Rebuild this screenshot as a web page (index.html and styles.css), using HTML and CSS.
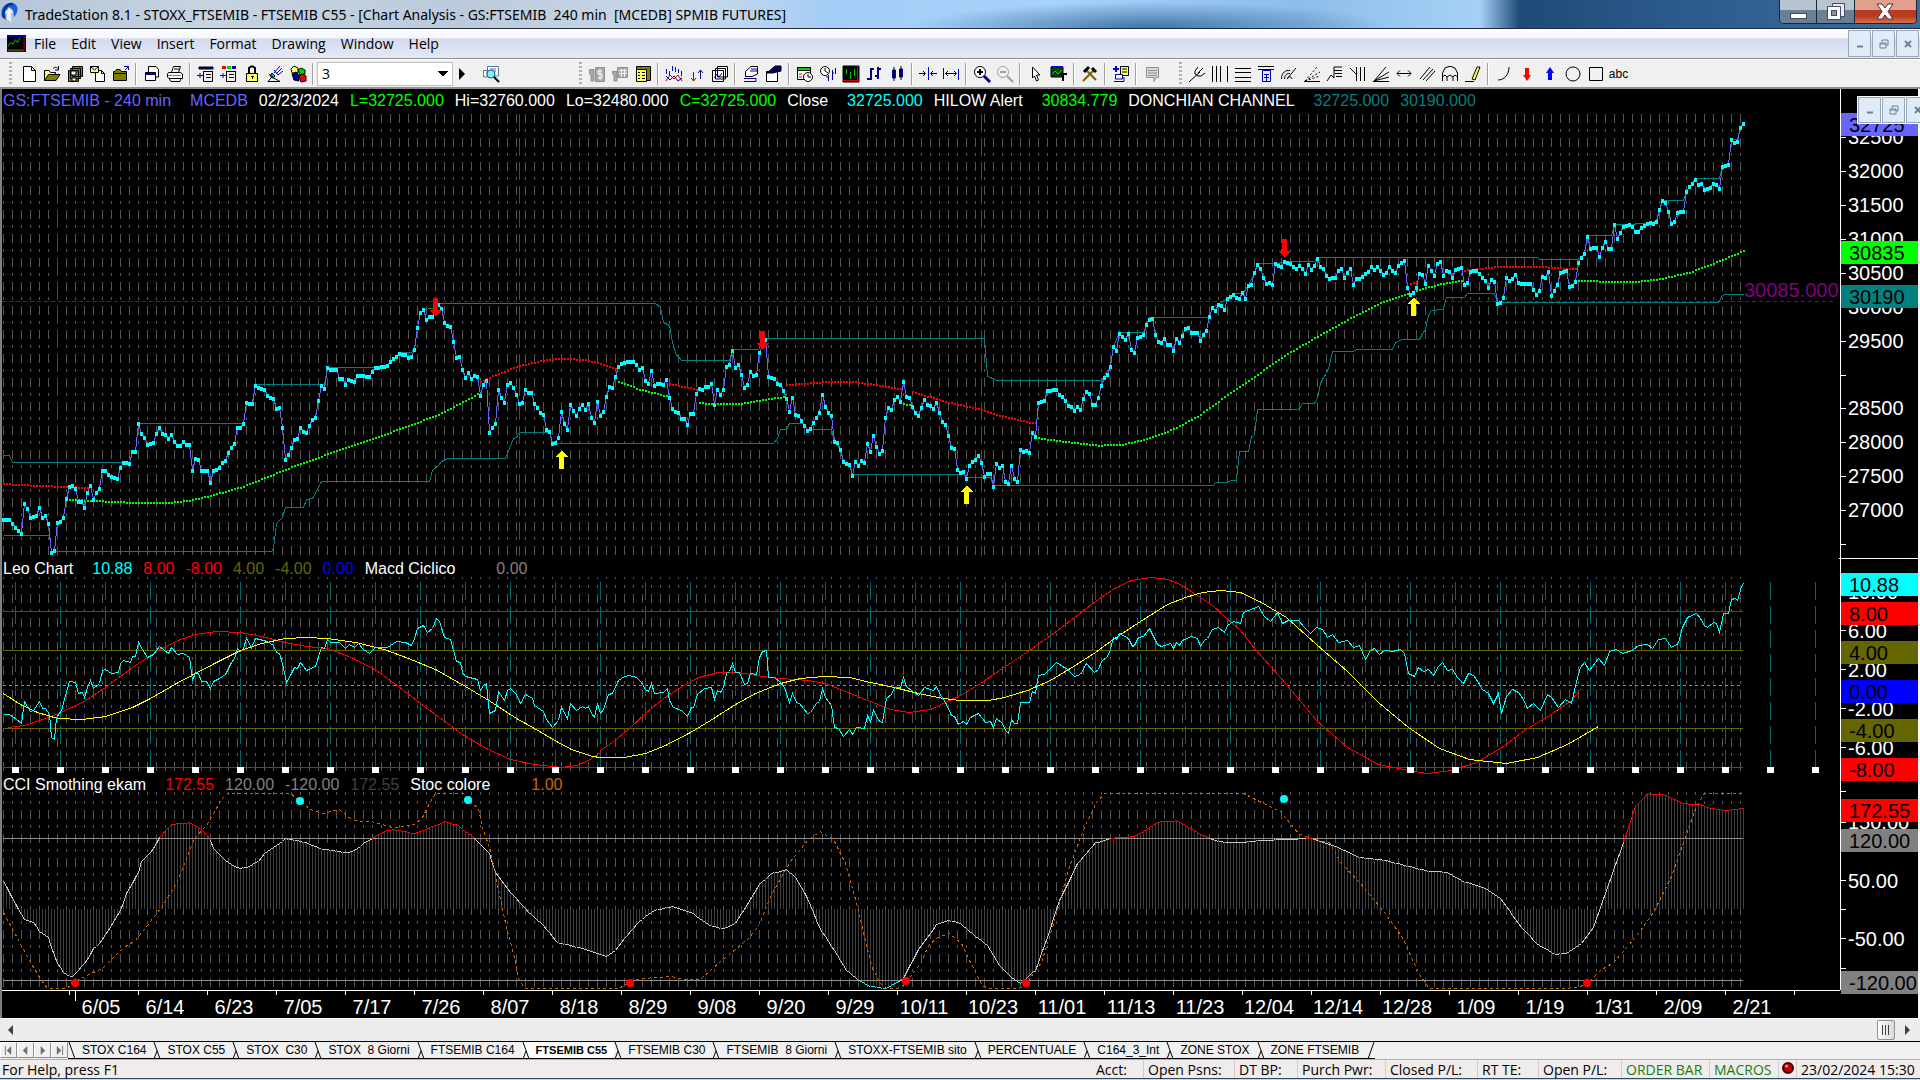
FILE: index.html
```html
<!DOCTYPE html>
<html lang="en">
<head>
<meta charset="utf-8">
<title>TradeStation 8.1 - STOXX_FTSEMIB</title>
<link rel="stylesheet" href="styles.css">
</head>
<body>
<div class="app">
<header class="titlebar">
  <svg class="logo" viewBox="0 0 20 24"><path d="M2 17C-1 8 7 0 15 4C19 7 18 13 14 17L13 10L9 7L5 12L6 20Z" fill="#1560d8"/><path d="M4 18C2 9 7 3 13 4" fill="none" stroke="#0a2c90" stroke-width="2"/><path d="M9 8L13 13H11V22L7 19V13H5Z" fill="#e8f2ff"/></svg>
  <h1>TradeStation 8.1 - STOXX_FTSEMIB - FTSEMIB C55 - [Chart Analysis - GS:FTSEMIB&nbsp; 240 min&nbsp; [MCEDB] SPMIB FUTURES]</h1>
  <div class="caption">
    <button class="min" aria-label="Minimize"><svg viewBox="0 0 20 20"><rect x="2.500" y="11.500" width="16" height="5" fill="#fff" stroke="#444a60"/></svg></button>
    <button class="max" aria-label="Restore"><svg viewBox="0 0 20 20"><path d="M6.500 1.500H18.500V14.500H6.500Z" fill="#eee" stroke="#444a60"/><path d="M1.500 4.500H14.500V17.500H1.500Z" fill="#fff" stroke="#444a60"/><rect x="5.500" y="8.500" width="5" height="5" fill="#7a96b8" stroke="#444a60"/></svg></button>
    <button class="close" aria-label="Close"><svg viewBox="0 0 20 20"><path d="M2 2H7L10 6L13 2H18L13 9.500L18 17H13L10 13L7 17H2L7 9.500Z" fill="#fff" stroke="#50303a"/></svg></button>
  </div>
</header>
<nav class="menubar">
  <svg class="doc" viewBox="0 0 20 18"><rect width="20" height="18"/><rect width="20" height="2" fill="#0000c0"/><path d="M1 12L4 8L6 10L9 5L11 8L14 3M1 16H17" stroke="#00d000" fill="none"/><path d="M18 2V17H1" stroke="#c00000" fill="none"/></svg>
  <a href="#">File</a><a href="#">Edit</a><a href="#">View</a><a href="#">Insert</a><a href="#">Format</a><a href="#">Drawing</a><a href="#">Window</a><a href="#">Help</a>
  <div class="mdi">
    <button aria-label="Minimize chart"><svg viewBox="0 0 12 12"><path d="M3 8.500H9" stroke-width="2"/></svg></button>
    <button aria-label="Restore chart"><svg viewBox="0 0 12 12"><path d="M4 4V2H10V7H8M2 5H8V10H2ZM2 6H8"/></svg></button>
    <button aria-label="Close chart"><svg viewBox="0 0 12 12"><path d="M3 3L9 9M9 3L3 9" stroke-width="2"/></svg></button>
  </div>
</nav>
<div class="toolbar">
  <div class="group first"><i class="grip"></i>
    <button aria-label="New"><svg viewBox="0 0 18 18"><path class="w" d="M3.500 1.500H11.500L15.500 5.500V16.500H3.500ZM11.500 1.500V5.500H15.500"/></svg></button>
    <button aria-label="Open"><svg viewBox="0 0 18 18"><path class="y" d="M1.500 15.500V5.500H6L7.500 7.500H12.500V9.500"/><path fill="#808000" d="M1.500 15.500L5.500 9.500H17L13 15.500Z"/><path d="M10 3.500C12 1.500 14 2 15.500 4.500M15.500 1V5H12"/></svg></button>
    <button aria-label="Save all"><svg viewBox="0 0 18 18"><path class="o" d="M6.500 1.500H16.500V11.500H6.500ZM4.500 3.500H14.500V13.500H4.500ZM2.500 5.500H12.500V16.500H2.500Z"/><path class="w" d="M5 6H10V10H5ZM6 13H10V16H6Z"/></svg></button>
    <button aria-label="New from template"><svg viewBox="0 0 18 18"><path class="w" d="M6.500 5.500H12.500L15.500 8.500V16.500H6.500ZM12.500 5.500V8.500H15.500"/><path class="y" d="M1.500 1.500H9.500V7.500H1.500ZM1.500 1.500L5.500 5L9.500 1.500"/></svg></button>
    <button aria-label="Close workspace"><svg viewBox="0 0 18 18"><path class="o" d="M1.500 15.500V6.500H3L4.500 4.500H8L9.500 6.500H14.500V15.500ZM2 8.500H14"/><path stroke="#0000a0" d="M12 1.500H16.500V5M16 2L13 5"/></svg></button>
    <i class="sep"></i>
    <button aria-label="Window"><svg viewBox="0 0 18 18"><path class="w" d="M5.500 1.500H13L15.500 4.500V12H5.500Z"/><path class="n" d="M2.500 7.500H12.500V15.500H2.500Z"/><path class="w" stroke="none" d="M3 10H12V15H3Z"/></svg></button>
    <button aria-label="Print"><svg viewBox="0 0 18 18"><path class="w" d="M5.500 7.500L7.500 1.500H14.500L12.500 7.500M8 4H13M2.500 7.500H14.500L16.500 9V13.500H3L1.500 12V9ZM3 13.500L5 16.500H14L15 13.500"/><path stroke="#808080" d="M2 10.500H15"/></svg></button>
    <i class="sep"></i>
    <button aria-label="Insert row"><svg viewBox="0 0 18 18"><path class="n" d="M2 2H16V4H2Z"/><path d="M6 6.500H16M6.500 7V16.500H15.500V6M9 9.500H14M9 12.500H14"/><path stroke="#0000a0" d="M0 10.500H7M3 8V13"/></svg></button>
    <button aria-label="Insert column"><svg viewBox="0 0 18 18"><path class="r" stroke="none" d="M2 1H6V4H2Z"/><path class="g" stroke="none" d="M7 1H11V4H7Z"/><path class="n" stroke="none" d="M12 1H16V4H12Z"/><path d="M6 6.500H16M6.500 7V16.500H15.500V6M9 9.500H14M9 12.500H14"/><path stroke="#0000a0" d="M0 10.500H7M3 8V13"/></svg></button>
    <button aria-label="Lock"><svg viewBox="0 0 18 18"><path stroke-width="2" d="M6 8V3L8 1.500H10L12 3V8"/><path class="y" d="M3.500 8.500H14.500V16.500H3.500Z"/><path d="M9.500 11V14M8 11.500H11"/></svg></button>
    <button aria-label="Signal"><svg viewBox="0 0 18 18"><path fill="#00c0c0" d="M6 8L9 11L7 13L4 11Z"/><path d="M2 16.500L6 12L14 16.500ZM3 9L9 14"/><path stroke="#0000c0" d="M8 8L14 1M10 9L16 3M12 10L17 6M8 5L12 10"/></svg></button>
    <button aria-label="Blocks"><svg viewBox="0 0 18 18"><path class="y" d="M2 4L5 1L9 3V8H3Z"/><path class="g" d="M9 5L12 3L16 5V9L11 10Z"/><path class="n" d="M3 9L7 7L10 10V16L5 15Z"/><path class="r" d="M10 11L14 9L17 11V16L12 17Z"/></svg></button>
    <i class="sep"></i>
    <select class="combo" aria-label="Symbol"><option>3</option></select>
    <button class="go" aria-label="Go"><svg viewBox="0 0 18 18"><path d="M6 3V15L12 9Z" fill="#000" stroke="none"/></svg></button>
    <button aria-label="Look up"><svg viewBox="0 0 18 18"><path class="w" stroke="#6070a0" d="M1.500 5.500H5V12H1.500ZM5.500 1.500H16.500V11H5.500ZM8 4H14M8 6H14"/><circle cx="9" cy="9" r="4" fill="#80f0f8" stroke="#206080"/><path stroke-width="2" d="M12 12L17 17"/></svg></button>
  </div>
  <div class="group second"><i class="grip"></i>
    <button aria-label="Symbol data"><svg viewBox="0 0 18 18"><path fill="#a8a8a8" stroke="#909090" d="M1.500 4.500H6V16H3V9H1.500ZM7.500 2.500H16.500V16.500H7.500Z"/><path stroke="#fff" d="M14 6H10V9H14V13H10M12 4V15"/></svg></button>
    <button aria-label="Table data"><svg viewBox="0 0 18 18"><path fill="#a8a8a8" stroke="#909090" d="M1.500 6.500H6V16H3V9H1.500ZM6.500 2.500H16.500V12.500H6.500Z"/><path stroke="#fff" d="M8 5.500H16M8 8.500H16M10.500 4V12M13.500 4V12"/></svg></button>
    <button aria-label="Data window"><svg viewBox="0 0 18 18"><path class="o" d="M2.500 1.500H16.500V15.500H2.500Z"/><path class="y" d="M2.500 4.500H12.500V16.500H2.500ZM4 7.500H6M8 7.500H11M4 10.500H6M8 10.500H11M4 13.500H6M8 13.500H11"/></svg></button>
    <i class="sep"></i>
    <button aria-label="Indicators"><svg viewBox="0 0 18 18"><path stroke="#0000d0" d="M1.500 4V9M4.500 6V10M7.500 1V6M10.500 2V7M13.500 4V8M16.500 6V11"/><path stroke="#d00000" d="M1 16L5 10L9 14L13 10L17 16"/><path stroke="#0000a0" d="M1 11L5 15L9 11L13 16L17 13"/></svg></button>
    <button aria-label="Strategies"><svg viewBox="0 0 18 18"><path stroke="#b00000" d="M5.500 7V16M3 13L5.500 16L8 13"/><path stroke="#000080" d="M12.500 5V14M10 8L12.500 5L15 8"/></svg></button>
    <button aria-label="Studies"><svg viewBox="0 0 18 18"><path class="w" d="M6.500 1.500H16.500V12H6.500ZM4.500 3.500H14.500V14H4.500ZM1.500 5.500H12.500V16.500H1.500Z"/><path stroke="#0000d0" d="M3 13L6 9L8 12L11 8"/></svg></button>
    <i class="sep"></i>
    <button aria-label="Format analysis"><svg viewBox="0 0 18 18"><path class="w" d="M3.500 6.500L9 1.500H15.500V9L10 11.500H3.500Z"/><path stroke="#000080" d="M2 13.500H14V16.500H2M9 4H15M8 6H15"/></svg></button>
    <button aria-label="Format window"><svg viewBox="0 0 18 18"><path class="w" d="M1.500 6.500H12.500V16.500H1.500Z"/><path fill="#000060" d="M2 8L10 1H16V6L8 8Z"/></svg></button>
    <i class="sep"></i>
    <button aria-label="Calendar"><svg viewBox="0 0 18 18"><path class="w" d="M1.500 2.500H14.500V14.500H1.500Z"/><path class="g" d="M1.500 2.500H14.500V5.500H1.500Z"/><path stroke="#c00000" d="M3 9H6M3 12H6"/><circle class="w" cx="12" cy="12" r="4.500"/><path d="M12 9V12H15"/></svg></button>
    <button aria-label="Time"><svg viewBox="0 0 18 18"><circle class="w" cx="6" cy="6" r="4.500"/><path d="M6 3V6L9 8"/><path stroke="#0000a0" d="M9.500 10V16M7 12H9M13.500 5V15M15 8H13M16.500 3V9"/></svg></button>
    <button aria-label="Bar style"><svg viewBox="0 0 18 18"><path fill="#000" d="M1 1H17V17H1Z"/><path stroke="#00d000" d="M4.500 4V9M8.500 7V14M12.500 4V11"/><path stroke="#d00000" d="M1 15.500H17M15.500 1V17"/></svg></button>
    <button aria-label="Bars"><svg viewBox="0 0 18 18"><path stroke="#000080" stroke-width="2" d="M6 3V15M2 14H6M6 4H9M13 2V14M10 11H13M13 4H16"/></svg></button>
    <button aria-label="Candles"><svg viewBox="0 0 18 18"><path class="n" stroke="#0000a0" d="M4.500 5H7.500V13H4.500ZM11.500 4H14.500V12H11.500Z"/><path d="M6 2V16M13 1V15"/></svg></button>
    <i class="sep"></i>
    <button aria-label="Decrease spacing"><svg viewBox="0 0 18 18"><path d="M0 8.500H6M4 6L6.500 8.500L4 11M18 8.500H12M14 6L11.500 8.500L14 11"/><path stroke="#0000c0" d="M9.500 2V15"/></svg></button>
    <button aria-label="Increase spacing"><svg viewBox="0 0 18 18"><path d="M4 8.500H14M6 6L3.500 8.500L6 11M12 6L14.500 8.500L12 11"/><path stroke="#0000c0" d="M1.500 3V14M16.500 4V15"/></svg></button>
    <i class="sep"></i>
    <button aria-label="Zoom in"><svg viewBox="0 0 18 18"><circle class="w" cx="7" cy="7" r="5.500"/><path stroke-width="2" d="M4 7H10M7 4V10"/><path stroke="#000080" stroke-width="3" d="M11 11L17 17"/></svg></button>
    <button aria-label="Zoom out"><svg viewBox="0 0 18 18"><circle cx="7" cy="7" r="5.500" stroke="#a0a0a0"/><path stroke="#a0a0a0" stroke-width="2" d="M4 7H10M11 11L17 17"/></svg></button>
    <i class="sep"></i>
    <button aria-label="Pointer"><svg viewBox="0 0 18 18"><path class="w" d="M5.500 2L13 10H9.500L11.500 15L9.500 16L7.500 11L5.500 13Z"/></svg></button>
    <button aria-label="Chart text"><svg viewBox="0 0 18 18"><path fill="#004000" d="M1 2H13V12H1Z"/><path stroke="#0000ff" stroke-width="2" d="M1 2H13"/><path stroke="#00e000" d="M2 9L5 6L8 9L12 5"/><path stroke-width="2" d="M9 9H17M13 9V16"/></svg></button>
    <i class="sep"></i>
    <button aria-label="Tools"><svg viewBox="0 0 18 18"><path stroke="#806000" stroke-width="2" d="M2 16L13 5M4 4L15 15"/><path stroke-width="3" d="M3 7L8 2M11 3L15 7"/></svg></button>
    <i class="sep"></i>
    <button aria-label="Add analysis"><svg viewBox="0 0 18 18"><path stroke="#0000e0" stroke-width="2" d="M4 1V7M1 4H7"/><path class="y" d="M8.500 1.500H16.500V10.500H8.500ZM10 4H15M10 7H15"/><path class="w" stroke="#000080" d="M3.500 9.500H10.500V14H3.500ZM2 16.500H12V12"/></svg></button>
    <i class="sep"></i>
    <button aria-label="Comments"><svg viewBox="0 0 18 18"><path fill="#d8d8d8" stroke="#909090" d="M3.500 2.500H15.500V12.500H13L11 16.500V12.500H3.500ZM5 5.500H14M5 8H14M5 10.500H14"/></svg></button>
  </div>
  <div class="group"><i class="grip"></i>
    <button aria-label="Pitchfork"><svg viewBox="0 0 18 18"><path d="M1 17L12 7M7 6L10 2M7 6V9L10 11H13L17 8M10 8L15 3"/></svg></button>
    <button aria-label="Vertical lines"><svg viewBox="0 0 18 18"><path d="M1.500 1V17M5.500 1V17M9.500 1V17M16.500 1V17"/></svg></button>
    <button aria-label="Horizontal lines"><svg viewBox="0 0 18 18"><path d="M1 3.500H17M1 7.500H17M1 12.500H17M1 16.500H17"/></svg></button>
    <button aria-label="Price levels"><svg viewBox="0 0 18 18"><path d="M1 1.500H17M1 4.500H17"/><path fill="#e0e8ff" stroke="#0000a0" d="M5.500 5.500H13.500V16.500H5.500ZM7 9.500H12M7 12.500H12M9.500 9V16"/></svg></button>
    <button aria-label="Fibonacci arcs"><svg viewBox="0 0 18 18"><path d="M1.500 14C1.500 7 6 5 10 5.500M4.500 14C4.500 10 7 8 10 8.500M7.500 14C8 11 11 11 12 14M7 14L16 3"/></svg></button>
    <button aria-label="Fan dotted"><svg viewBox="0 0 18 18"><path stroke-dasharray="2 2" d="M2 16L14 2M2 16L17 7M2 16L17 11"/><path d="M1 16.500H17"/></svg></button>
    <button aria-label="Retracement"><svg viewBox="0 0 18 18"><path d="M1 16L5 10L8 13V2H16M8 5.500H16M9 8.500H16M10 11.500H16"/></svg></button>
    <button aria-label="Time zones"><svg viewBox="0 0 18 18"><path d="M1 3L7 9M7.500 2V16M11.500 2V16M15.500 2V16"/></svg></button>
    <button aria-label="Gann fan"><svg viewBox="0 0 18 18"><path d="M1 16.500H17M2 16L14 2M2 16L17 7M2 16L17 12"/></svg></button>
    <button aria-label="Extend"><svg viewBox="0 0 18 18"><path d="M2 8.500H16M5 5.500L2 8.500L5 11.500M13 5.500L16 8.500L13 11.500"/></svg></button>
    <button aria-label="Channel"><svg viewBox="0 0 18 18"><path d="M2 14L12 2M5 15L15 4M8 16L17 6"/></svg></button>
    <button aria-label="Cycle"><svg viewBox="0 0 18 18"><path d="M1.500 16V8L4 3L8 1.500H10L14 3L16.500 8V16M1.500 12L4 10L6 12V16M6 12L9 10L12 12V16M12 12L14 10L16.500 12"/></svg></button>
    <button aria-label="Pencil"><svg viewBox="0 0 18 18"><path class="y" d="M8 14L13 2H16L11 15Z"/><path d="M1 16.500H10"/></svg></button>
    <i class="sep"></i>
    <button aria-label="Arc"><svg viewBox="0 0 18 18"><path d="M3 15C9 15 14 10 14 2"/></svg></button>
    <button aria-label="Down arrow"><svg viewBox="0 0 18 18"><path fill="#f00" stroke="none" d="M7 3H11V10H13L9 16L5 10H7Z"/></svg></button>
    <button aria-label="Up arrow"><svg viewBox="0 0 18 18"><path fill="#00f" stroke="none" d="M7 15H11V8H13L9 2L5 8H7Z"/></svg></button>
    <button aria-label="Ellipse"><svg viewBox="0 0 18 18"><circle cx="9" cy="9" r="7"/></svg></button>
    <button aria-label="Rectangle"><svg viewBox="0 0 18 18"><path d="M2.500 2.500H15.500V15.500H2.500Z"/></svg></button>
    <button class="abc">abc</button>
  </div>
</div>
<main class="chart">
  <section class="panel price">
    <p class="legend"><span class="violet">GS:FTSEMIB - 240 min</span><span class="violet far">MCEDB</span><span>02/23/2024</span><span class="lime">L=32725.000</span><span>Hi=32760.000</span><span>Lo=32480.000</span><span class="lime">C=32725.000</span><span>Close</span><span class="cyan far">32725.000</span><span>HILOW Alert</span><span class="lime far">30834.779</span><span>DONCHIAN CHANNEL</span><span class="teal far">32725.000</span><span class="teal">30190.000</span></p>
    <svg class="plot" id="price" viewBox="2 109 1838 449" preserveAspectRatio="none"></svg>
    <svg class="axis" viewBox="1841 89 77 469" preserveAspectRatio="none">
      <path class="ticks" d="M1840 137.500h6m-6 34h6m-6 34h6m-6 34h6m-6 34h6m-6 34h6m-6 34h6m-6 34h6m-6 33h6m-6 34h6m-6 34h6m-6 34h6m-6 34h6"/>
      <g class="lab"><text x="1848" y="144">32500</text><text x="1848" y="178">32000</text><text x="1848" y="212">31500</text><text x="1848" y="246">31000</text><text x="1848" y="280">30500</text><text x="1848" y="314">30000</text><text x="1848" y="348">29500</text><text x="1848" y="415">28500</text><text x="1848" y="449">28000</text><text x="1848" y="483">27500</text><text x="1848" y="517">27000</text></g>
      <g class="tag"><rect x="1841" y="113" width="77" height="23" fill="#6666ff"/><text x="1849" y="132">32725</text><rect x="1841" y="241" width="77" height="23" fill="#00ff00"/><text x="1849" y="260">30835</text><rect x="1841" y="285" width="77" height="23" fill="#008080"/><text x="1849" y="304">30190</text></g>
      <path class="ticks" d="M1839 558.500H1918"/>
    </svg>
  </section>
  <section class="panel leo">
    <p class="legend"><span>Leo Chart</span><span class="cyan far">10.88</span><span class="red">8.00</span><span class="red">-8.00</span><span class="olive">4.00</span><span class="olive">-4.00</span><span class="blue">0.00</span><span>Macd Ciclico</span><span class="gray farther">0.00</span></p>
    <svg class="plot" id="leo" viewBox="2 577 1838 198" preserveAspectRatio="none"></svg>
    <svg class="axis" viewBox="1841 558 77 217" preserveAspectRatio="none">
      <path class="ticks" d="M1840 591.500h6m-6 39h6m-6 39h6m-6 39h6m-6 39h6"/>
      <g class="lab"><text x="1848" y="599">10.00</text><text x="1848" y="638">6.00</text><text x="1848" y="677">2.00</text><text x="1848" y="716">-2.00</text><text x="1848" y="755">-6.00</text></g>
      <g class="tag"><rect x="1841" y="573" width="77" height="23" fill="#00ffff"/><text x="1849" y="592">10.88</text><rect x="1841" y="602" width="77" height="23" fill="#ff0000"/><text x="1849" y="621">8.00</text><rect x="1841" y="641" width="77" height="23" fill="#666600"/><text x="1849" y="660">4.00</text><rect x="1841" y="680" width="77" height="23" fill="#0000ff"/><text x="1849" y="699">0.00</text><rect x="1841" y="719" width="77" height="23" fill="#666600"/><text x="1849" y="738">-4.00</text><rect x="1841" y="758" width="77" height="23" fill="#ff0000"/><text x="1849" y="777">-8.00</text></g>
    </svg>
  </section>
  <section class="panel cci">
    <p class="legend"><span>CCI Smothing ekam</span><span class="red far">172.55</span><span class="gray">120.00</span><span class="gray">-120.00</span><span class="dark">172.55</span><span>Stoc colore</span><span class="orange farther">1.00</span></p>
    <svg class="plot" id="cci" viewBox="2 792 1838 198" preserveAspectRatio="none"></svg>
    <svg class="axis" viewBox="1841 775 77 215" preserveAspectRatio="none">
      <path class="ticks" d="M1840 791.500h6m-6 31h6m-6 58h6m-6 29h6m-6 29h6m-6 30h6"/>
      <g class="lab"><text x="1848" y="829">150.00</text><text x="1848" y="888">50.00</text><text x="1848" y="946">-50.00</text></g>
      <g class="tag"><rect x="1841" y="799" width="77" height="23" fill="#ff0000"/><text x="1849" y="818">172.55</text><rect x="1841" y="829" width="77" height="23" fill="#808080"/><text x="1849" y="848">120.00</text><rect x="1841" y="971" width="77" height="23" fill="#808080"/><text x="1849" y="990">-120.00</text></g>
    </svg>
  </section>
  <svg class="dates" id="dates" viewBox="2 990 1916 28" preserveAspectRatio="none"></svg>
  <div class="mdi floating">
    <button aria-label="Minimize window"><svg viewBox="0 0 12 12"><path d="M3 8.500H9" stroke-width="2"/></svg></button>
    <button aria-label="Restore window"><svg viewBox="0 0 12 12"><path d="M4 4V2H10V7H8M2 5H8V10H2ZM2 6H8"/></svg></button>
    <button aria-label="Close window"><svg viewBox="0 0 12 12"><path d="M3 3L9 9M9 3L3 9" stroke-width="2"/></svg></button>
  </div>
</main>
<div class="scroll">
  <button aria-label="Scroll left"><svg viewBox="0 0 8 12"><path d="M6 1V11L1 6Z"/></svg></button>
  <button class="thumb" aria-label="Scroll thumb"><svg viewBox="0 0 10 10"><path d="M1 0h1v10h-1zM4 0h1v10h-1zM7 0h1v10h-1z"/></svg></button>
  <button aria-label="Scroll right"><svg viewBox="0 0 8 12"><path d="M2 1V11L7 6Z"/></svg></button>
</div>
<nav class="tabs" id="tabs">
  <button class="nav" aria-label="First"><svg viewBox="0 0 10 10"><path d="M1 0H2V10H1ZM8 0V10L3 5Z"/></svg></button>
  <button class="nav" aria-label="Previous"><svg viewBox="0 0 10 10"><path d="M7 0V10L2 5Z"/></svg></button>
  <button class="nav" aria-label="Next"><svg viewBox="0 0 10 10"><path d="M3 0V10L8 5Z"/></svg></button>
  <button class="nav" aria-label="Last"><svg viewBox="0 0 10 10"><path d="M2 0V10L7 5ZM8 0H9V10H8Z"/></svg></button>
  <a href="#">STOX C164</a><a href="#">STOX C55</a><a href="#">STOX  C30</a><a href="#">STOX  8 Giorni</a><a href="#">FTSEMIB C164</a><a href="#" class="active">FTSEMIB C55</a><a href="#">FTSEMIB C30</a><a href="#">FTSEMIB  8 Giorni</a><a href="#">STOXX-FTSEMIB sito</a><a href="#">PERCENTUALE</a><a href="#">C164_3_Int</a><a href="#">ZONE STOX</a><a href="#" class="last">ZONE FTSEMIB</a>
</nav>
<footer class="status">
  <span class="help">For Help, press F1</span><span>Acct:</span><span>Open Psns:</span><span>DT BP:</span><span>Purch Pwr:</span><span>Closed P/L:</span><span>RT TE:</span><span>Open P/L:</span><span class="on">ORDER BAR</span><span class="on">MACROS</span><span class="led"><svg viewBox="0 0 12 12"><circle cx="6" cy="6" r="5" fill="#c00000" stroke="#400000" stroke-width="2"/><circle cx="4.500" cy="4" r="1.500" fill="#ff9090"/></svg></span><span>23/02/2024 15:30</span>
</footer>
</div>
<script src="chart.js"></script>
</body>
</html>
```
FILE: styles.css
```css
* { box-sizing: border-box; }
body { margin: 0; background: #f0eeee; font: 14px "Open Sans", "Noto Sans", sans-serif; color: #000; }
button { border: 0; padding: 0; background: none; }
a { color: inherit; text-decoration: none; }
svg { display: block; }
.app { display: grid; grid-template-rows: 29px 30px 30px 1fr 23px 18px 21px; min-height: 100vh; overflow: hidden; }

.titlebar { display: flex; align-items: flex-start; border-bottom: 1px solid #1c2a3c;
  background:
    radial-gradient(ellipse 240px 26px at 1150px 28px, #3f74a8 0, transparent 100%),
    linear-gradient(90deg, #b4c5d8 0, #c6d3e0 200px, #bccbdc 460px, #c8d9ea 700px, #a3cdf6 830px, #a8d2fa 1050px, #8dbdea 1300px, #a6d0f6 1480px, #1f4a78 1520px, #2b5b8c 1680px, #3d6c9c 100%); }
.logo { width: 20px; height: 24px; }
.titlebar h1 { flex: 1; margin: 0 0 0 5px; font-family: "Noto Sans", sans-serif; font-size: 14px; line-height: 29px; font-weight: 400; white-space: nowrap; }
.caption { display: flex; width: 138px; height: 24px; margin-right: 3px; border: 1px solid #1c2430; border-top: 0; border-radius: 0 0 5px 5px; overflow: hidden; }
.caption button { flex: 37; display: grid; place-items: center; background: linear-gradient(#b8c4d0 0 45%, #6b7f94 45% 100%); border-right: 1px solid #1c2430; }
.caption .close { flex: 62; background: linear-gradient(#e0a08c 0 45%, #b83c20 45% 70%, #d8704c); border: 0; }
.caption svg { width: 20px; height: 20px; }

.menubar { display: flex; align-items: center; gap: 15px; padding-left: 7px; background: linear-gradient(#fff 0, #f4f6fb 30%, #d4dbee 34%, #e4e8f6 100%); border-bottom: 1px solid #909090; }
.menubar .doc { width: 19px; height: 17px; margin-right: -7px; }
.mdi { display: flex; gap: 1px; margin-left: auto; }
.mdi button { width: 23px; height: 27px; display: grid; place-items: center; background: #dfebf7; border: 1px solid #98a8b8; }
.mdi svg { width: 12px; height: 12px; fill: none; stroke: #70808e; }
.menubar .mdi { margin-right: 1px; }
.floating { position: absolute; top: 7px; right: -12px; border: 1px solid #fff; background: #fff; }
.floating button { height: 26px; }

.toolbar { display: flex; background: #f0f0f0; border-bottom: 2px solid #909090; border-top: 1px solid #fff; }
.group { display: flex; align-items: center; padding-left: 9px; }
.group.first { width: 570px; }
.group.second { width: 600px; }
.grip { width: 3px; height: 24px; margin-right: 3px; background: repeating-linear-gradient(#b0b0b0 0 2px, transparent 2px 4px); }
.first .grip { margin-right: 5px; }
.sep { width: 8px; height: 22px; background: linear-gradient(90deg, transparent 3px, #a0a0a0 3px 4px, #fff 4px 5px, transparent 5px); }
.group button { width: 23px; height: 24px; display: grid; place-items: center; }
.group svg { width: 18px; height: 18px; fill: none; stroke: #000; }
.group .go { width: 18px; margin-right: 8px; }
.group .w { fill: #fff; }
.group .y { fill: #ffff60; }
.group .o { fill: #808000; }
.group .n { fill: #0000a0; }
.group .r { fill: #f00000; }
.group .g { fill: #00d000; }
.group .abc { font: 12px "Liberation Sans", sans-serif; color: #000; }
.combo { width: 136px; height: 24px; padding: 0 4px; border: 1px solid #c0c0c0; border-radius: 0; appearance: none; font: 14px "Open Sans", sans-serif; color: #000;
  background-color: #fff; background-repeat: no-repeat; background-size: 5px 6px; background-position: right 4px center, right 9px center;
  background-image: linear-gradient(to bottom right, #000 50%, transparent 50%), linear-gradient(to bottom left, #000 50%, transparent 50%); }

.chart { position: relative; display: grid; grid-template-rows: 469fr 217fr 215fr 28fr; background: #000; border-left: 2px solid #808080; border-right: 2px solid #fff; }
.panel { display: grid; grid-template-columns: 1fr 78px; min-height: 0; }
.price { grid-template-rows: 20px 1fr; }
.leo { grid-template-rows: 19px 1fr; }
.cci { grid-template-rows: 17px 1fr; }
.legend { display: flex; gap: 11px; margin: 0; padding-left: 1px; font: 16px/22px "Liberation Sans", Arial, sans-serif; color: #fff; white-space: nowrap; }
.price .legend { line-height: 24px; }
.cci .legend { line-height: 19px; }
.legend .far { margin-left: 8px; }
.legend .farther { margin-left: 30px; }
.plot, .axis { width: 100%; height: 100%; overflow: visible; }
.axis { grid-column: 2; grid-row: 1 / 3; border-left: 1px solid #fff; }
.plot { grid-row: 2; }
.plot * { shape-rendering: crispEdges; fill: none; }
.plot .dot { shape-rendering: auto; }
.violet { color: #6666ff; }
.lime { color: #00ff00; }
.cyan { color: #00ffff; }
.teal { color: #008080; }
.red { color: #ff0000; }
.olive { color: #666600; }
.blue { color: #0000ff; }
.gray { color: #808080; }
.dark { color: #404040; }
.orange { color: #cc6600; }
.ticks { stroke: #fff; stroke-width: 1; shape-rendering: crispEdges; }
.axis text, .dates text, .plot text { font: 20px "Liberation Sans", Arial, sans-serif; }
.lab, .dates text { fill: #fff; }
.tag text { fill: #000; }
.dates { width: 100%; height: 100%; }
.dates text { text-anchor: middle; }

.plot .grid { stroke: #565656; stroke-dasharray: 9 6 3 6; }
.plot .session { stroke: #006666; stroke-dasharray: 18 6; }
.plot .donchian { stroke: #008080; }
.plot .close { stroke: #6666ff; }
.plot .closedots { stroke: #00ffff; stroke-width: 4; }
.plot .down { stroke: #ff0000; stroke-width: 2; }
.plot .up { stroke: #00ff00; stroke-width: 2; }
.plot .level { stroke: #800080; stroke-dasharray: 4 3; }
.plot .leveltext { fill: #800080; }
.plot .arrowdown { fill: #ff0000; }
.plot .arrowup { fill: #ffff00; }
.plot .redline { stroke: #ff0000; }
.plot .yellowline { stroke: #ffff00; }
.plot .cyanline { stroke: #00ffff; }
.plot .oliveline { stroke: #666600; }
.plot .grayline { stroke: #909090; }
.plot .graydash { stroke: #909090; stroke-dasharray: 3 3; }
.plot .bluedash { stroke: #0000ff; stroke-dasharray: 3 3; }
.plot .marks { fill: #fff; }
.plot .histogram { stroke: #404040; }
.plot .whiteline { stroke: #c8c8c8; }
.plot .stoc { stroke: #cc6600; stroke-dasharray: 3 3; }
.plot .reddot { fill: #ff0000; }
.plot .cyandot { fill: #00ffff; }

.scroll { display: flex; align-items: center; justify-content: flex-end; background: #ececec; border-top: 1px solid #fff; padding-right: 5px; }
.scroll button { width: 16px; height: 20px; display: grid; place-items: center; }
.scroll button:first-child { margin: 0 auto 0 3px; }
.scroll svg { width: 8px; height: 12px; fill: #404040; }
.scroll .thumb { width: 18px; margin-right: 4px; border: 1px solid #909090; border-radius: 2px; background: linear-gradient(90deg, #fff, #d8d8d8); }
.scroll .thumb svg { width: 10px; height: 10px; }

.tabs { display: flex; border-top: 1px solid #000; background: #f0f0f0; font: 12px/16px "Liberation Sans", Arial, sans-serif; }
.tabs .nav { width: 17px; height: 16px; display: grid; place-items: center; border: 1px solid #909090; border-top-color: #fff; border-left-color: #fff; }
.tabs .nav svg { width: 9px; height: 9px; fill: #707070; }
.tabs a { display: flex; height: 17px; padding-right: 7px; white-space: pre; border-bottom: 1px solid #000; }
.tabs a svg { width: 8px; height: 17px; margin-right: 6px; overflow: visible; fill: none; stroke: #000; }
.tabs .active { background: #fff; font-weight: 700; font-size: 11px; }
.tabs .last { padding-right: 0; }
.tabs .last svg:last-child { margin: 0 0 0 8px; }

.status { display: flex; height: 19px; line-height: 19px; background: #f0ecec; border-top: 1px solid #b0b0b0; box-shadow: 0 1px 0 #304860, 0 3px 0 #c8d8e8; white-space: nowrap; }
.status span { padding-left: 4px; border-left: 1px solid #d0ccd0; }
.status .help { flex: 1; padding-left: 2px; border: 0; }
.status span:nth-child(2) { width: 52px; border-color: transparent; }
.status span:nth-child(3) { width: 91px; }
.status span:nth-child(4) { width: 63px; }
.status span:nth-child(5) { width: 88px; }
.status span:nth-child(6) { width: 92px; }
.status span:nth-child(7) { width: 61px; }
.status span:nth-child(8) { width: 83px; }
.status span:nth-child(9) { width: 88px; }
.status span:nth-child(10) { width: 69px; }
.status span:nth-child(11) { width: 18px; padding: 2px 0 0 3px; }
.status span:nth-child(12) { width: 124px; }
.status .on { color: #108010; }
.status .led svg { width: 12px; height: 12px; }
```
FILE: chart.js
```js
const NS = 'http://www.w3.org/2000/svg';
const BAR = 3, FIRST = 3;

function add(id, tag, cls, attrs, text) {
  const el = document.createElementNS(NS, tag);
  if (cls) el.setAttribute('class', cls);
  for (const k in attrs) el.setAttribute(k, attrs[k]);
  if (text) el.textContent = text;
  document.getElementById(id).appendChild(el);
}
/* A block of samples: origin, units per pixel, then x,y pairs. */
function block(x0, y0, ux, uy, text) {
  return text.trim().split(/\s+/).map(p => {
    const [x, y] = p.split(',').map(Number);
    return [x0 + x / ux, y0 + y / uy];
  });
}
const a = t => block(0, 280, 2.45, 3, t);
const b = t => block(600, 280, 2.45, 3, t);
const c = t => block(1200, 100, 2.45, 3, t);
const w = t => block(0, 0, 0.81667, 0.81667, t);
const e = t => block(0, 740, 2.45, 3, t);
const f = t => block(0, 0, 1, 1, t);
const d = pts => 'M' + pts.map(p => p.map(v => Math.round(v) + 0.5).join(' ')).join('L');
const snap = x => FIRST + BAR * Math.round((x - FIRST) / BAR);
/* One value for every bar between the first and last key point. */
function bars(pts) {
  const out = [];
  const k = pts.map(p => [snap(p[0]), p[1]]).sort((p, q) => p[0] - q[0]);
  let i = 0;
  for (let x = k[0][0]; x <= k[k.length - 1][0]; x += BAR) {
    while (i < k.length - 2 && k[i + 1][0] < x) i++;
    const p = k[i], q = k[i + 1] || p;
    const t = q[0] === p[0] ? 1 : Math.min(1, (x - p[0]) / (q[0] - p[0]));
    out.push([x, p[1] + (q[1] - p[1]) * t]);
  }
  return out;
}
const dots = (pts, s) => bars(pts).map(p => `M${p[0] - s / 2 + 0.5} ${Math.round(p[1]) + (s % 2 ? 0.5 : 0)}h${s}`).join('');

function grid(id, top, bottom) {
  let path = '';
  const start = top - ((top - 90) % 24);
  for (let x = 3; x <= 1740; x += 9) path += `M${x + 0.5} ${start}V${bottom}`;
  add(id, 'path', 'grid', { d: path, 'clip-path': `inset(${Math.max(0, top - start)}px 0 0 0)` });
}
const line = (id, cls, y, x1 = 3, x2 = 1743) => add(id, 'path', cls, { d: `M${x1} ${y + 0.5}H${x2}` });

/* Price panel */
grid('price', 109, 555);
let s = '';
for (const x of [57, 519, 981, 1443]) s += `M${x + 0.5} 114V556`;
add('price', 'path', 'session', { d: s });
line('price', 'level', 301, 2, 1835);
add('price', 'text', 'leveltext', { x: 1744, y: 297 }, '30085.000');

const upper = [
  ...a('8,526 22,526 30,547 302,547 316,546 324,515 331,513 339,430 596,430 603,368 618,366 625,313 787,313 794,313 801,262 918,262 948,256 978,217 1007,217 1015,205 1022,140 1030,96 1037,86 1059,85 1067,70 1469,70'),
  ...b('0,70 135,70 148,82 155,125 168,134 177,185 185,226 192,228 199,241 317,241 324,208 388,208 405,175 941,175 949,288 968,296 970,301 1228,301 1250,257 1257,197 1272,157 1331,157 1346,112 1469,112'),
  ...c('0,652 15,652 22,648 30,622 67,594 82,580 103,578 118,555 133,515 140,490 192,490 207,482 280,482 287,472 825,472 831,478 927,478 941,458 949,406 1007,406 1015,373 1059,373 1074,370 1089,370 1118,362 1132,301 1184,301 1191,272 1213,235 1272,235 1279,198 1294,192 1301,116 1315,116 1324,80 1331,69')];
const lower = [
  ...a('8,766 119,766 126,814 665,814 670,805 677,728 690,710 699,680 743,680 750,656 765,654 787,604 1050,604 1059,570 1074,555 1081,542 1096,535 1237,535 1257,475 1265,470 1272,455 1345,455 1353,488 1469,488'),
  ...b('0,488 425,488 434,475 442,446 456,446 464,430 498,430 508,448 567,448 574,483 589,507 596,543 611,550 618,583 890,583 897,592 956,592 963,616 1469,616'),
  ...c('0,1156 32,1156 37,1147 67,1147 74,1141 89,1141 96,1054 118,1054 125,1008 133,1005 140,928 235,928 243,925 250,910 280,910 287,895 295,850 302,830 309,820 317,795 324,754 375,754 383,748 471,748 478,725 486,724 493,718 537,718 544,700 552,688 559,645 566,629 596,626 603,592 648,592 655,580 721,580 728,607 1270,607 1280,586 1287,583 1331,583')];
add('price', 'path', 'donchian', { d: d(upper) });
add('price', 'path', 'donchian', { d: d(lower) });

const close = [
  ...a('8,717 22,717 30,730 38,740 45,750 52,760 59,670 67,685 74,712 82,708 89,705 96,680 104,710 111,705 119,728 126,815 133,810 141,727 148,722 155,710 163,655 170,618 177,615 185,623 192,664 199,662 207,680 214,635 221,615 229,657 236,635 243,623 250,570 257,570 265,582 272,588 287,594 294,562 302,546 316,548 324,513 331,513 339,430 346,458 353,471 361,492 375,486 383,458 390,442 397,458 405,462 412,474 420,462 427,482 434,495 442,496 449,483 456,491 464,492 471,570 478,533 486,537 493,570 508,570 515,605 522,570 530,568 537,560 544,546 552,540 559,515 566,502 574,488 581,441 588,440 596,430 603,367 618,369 625,315 633,320 647,327 655,345 669,355 677,384 684,381 691,440 699,536 706,521 713,500 721,477 728,474 735,440 743,454 750,456 757,436 765,418 772,411 780,359 787,316 794,323 801,262 809,268 823,268 831,294 838,295 845,312 853,296 867,302 875,285 889,285 904,288 911,273 918,262 948,256 956,243 963,234 970,228 978,218 992,223 1000,232 1007,228 1015,206 1022,140 1030,96 1037,87 1044,117 1052,108 1059,107 1067,75 1074,72 1081,84 1088,125 1096,134 1103,137 1110,183 1118,232 1125,228 1132,268 1140,290 1147,276 1154,293 1162,285 1169,287 1176,345 1184,311 1191,300 1198,456 1206,441 1213,430 1221,327 1228,352 1235,366 1243,311 1250,305 1257,321 1265,341 1272,369 1279,366 1286,327 1294,335 1301,336 1309,369 1316,380 1323,395 1331,401 1338,447 1345,452 1353,489 1360,486 1367,472 1375,393 1382,430 1390,447 1397,373 1404,390 1412,405 1419,383 1426,373 1434,386 1441,368 1448,410 1456,427 1463,362'),
  ...b('1,405 8,393 15,348 22,318 30,321 37,288 44,258 52,250 60,245 67,242 82,244 89,252 96,267 103,262 111,299 118,310 125,271 133,316 140,309 155,311 162,296 170,351 177,384 185,393 192,395 199,413 207,413 214,432 221,399 229,399 236,339 243,323 251,326 258,317 265,317 273,308 280,372 287,327 295,342 302,327 309,259 317,252 324,210 331,262 339,252 346,282 353,321 361,311 368,274 375,286 383,282 390,215 397,195 405,177 412,287 427,294 434,308 442,312 449,329 456,354 464,393 471,350 478,402 486,405 493,419 500,434 508,450 515,443 522,425 530,411 537,396 544,341 552,377 559,395 567,405 574,483 581,486 589,507 596,543 611,552 618,585 625,543 633,555 640,540 648,546 655,488 662,513 669,464 677,497 684,519 692,510 699,410 706,381 713,386 721,357 728,347 736,362 743,302 750,348 757,350 765,378 772,396 780,405 787,381 794,356 802,371 809,374 816,384 824,365 831,396 838,424 846,431 853,465 860,500 868,503 875,566 882,575 890,573 897,594 904,554 912,542 919,537 927,526 934,545 941,587 948,580 956,578 963,618 970,548 978,561 985,555 993,602 1000,609 1007,554 1015,594 1022,603 1030,507 1037,513 1045,510 1052,516 1059,455 1066,467 1074,366 1088,360 1096,330 1118,327 1125,341 1132,348 1139,360 1147,375 1154,377 1162,390 1169,378 1177,387 1184,353 1191,332 1198,338 1206,372 1213,372 1221,350 1228,315 1235,291 1243,282 1250,257 1257,197 1265,210 1272,160 1280,168 1287,178 1294,158 1301,206 1309,216 1316,171 1324,167 1331,161 1338,131 1346,116 1353,114 1360,161 1368,183 1375,187 1382,173 1390,192 1397,191 1404,210 1412,173 1419,186 1427,164 1434,143 1441,140 1448,156 1463,156'),
  ...c('0,720 8,702 15,690 22,648 30,622 37,630 45,611 52,614 59,627 67,594 74,587 82,581 89,590 96,593 103,575 111,593 118,555 125,551 133,515 140,491 148,503 155,531 162,549 170,546 177,551 185,489 192,494 199,498 207,482 214,486 221,489 229,498 236,504 243,494 250,504 258,518 265,492 272,506 280,494 287,473 295,499 302,503 309,524 317,533 331,531 339,510 346,503 353,531 361,515 368,503 375,551 383,534 390,533 397,527 405,518 412,512 419,497 427,507 434,497 441,510 449,522 456,515 463,497 471,510 478,516 486,495 493,485 500,479 508,561 515,582 522,575 530,561 537,518 544,522 552,548 559,494 566,509 574,524 581,489 589,482 596,525 603,509 611,512 618,531 625,506 640,500 647,552 655,546 662,513 669,510 677,509 684,518 691,531 699,540 706,561 713,537 721,543 728,609 735,606 743,590 750,531 757,539 765,534 772,521 779,545 794,550 809,548 816,567 824,581 831,569 838,527 846,531 853,512 860,585 868,569 875,551 882,515 897,509 904,558 912,555 919,543 927,485 934,471 941,458 949,407 956,443 970,440 978,468 985,441 993,422 1000,443 1007,443 1015,373 1022,413 1030,395 1037,377 1052,372 1059,377 1067,392 1074,393 1081,380 1089,374 1103,365 1110,369 1118,362 1125,327 1132,300 1139,305 1147,333 1154,369 1162,363 1169,335 1184,332 1191,272 1199,257 1206,248 1213,236 1221,251 1228,248 1236,267 1250,260 1258,250 1265,251 1272,264 1279,198 1294,192 1301,116 1308,126 1315,124 1324,80 1331,69')];
for (const run of [
  a('8,612 30,614 96,618 141,620 214,624'), a('1176,306 1213,285 1272,258 1338,240 1390,236 1441,242 1507,266'),
  b('168,312 236,329'), b('456,315 508,311 560,306 625,307 677,316 736,328'), b('765,336 846,366 927,388 970,405 1052,428 1066,430'),
  c('515,551 530,546'), c('647,512 728,501 831,500 860,504 919,507')]) add('price', 'path', 'down', { d: dots(run, 2) });
for (const run of [
  a('165,659 229,663 316,668 420,668 464,662 515,648 596,620 699,569 801,523 918,474 1030,425 1081,400 1169,343'),
  b('44,306 96,329 162,349'), b('243,370 294,372 346,371 397,360 449,352'), b('743,372 757,376'),
  [...b('1074,475 1147,487 1220,497 1280,494 1338,478 1404,448 1469,405'), ...c('0,942 60,892 140,824 200,773 287,710 360,660 441,610 508,582')],
  c('530,572 589,552 640,542'), c('927,542 1000,546 1067,546 1125,538 1199,518 1250,495 1331,453')]) add('price', 'path', 'up', { d: dots(run, 2) });
add('price', 'path', 'close', { d: d(bars(close)) });
add('price', 'path', 'closedots', { d: dots(close, 3) });
for (const [x, y] of [[435, 298], [762, 331], [1284, 239]]) add('price', 'path', 'arrowdown', { d: `M${x - 2} ${y}h5v12h4l-6 7l-6 -7h3z` });
for (const [x, y] of [[561, 450], [966, 485], [1413, 297]]) add('price', 'path', 'arrowup', { d: `M${x - 2} ${y + 19}h5v-12h4l-6 -7l-6 7h3z` });

/* Cycle panel */
grid('leo', 577, 771);
s = '';
for (let x = 15; x <= 1815; x += 45) s += `M${x + 0.5} 582V768`;
add('leo', 'path', 'session', { d: s });
line('leo', 'redline', 611); line('leo', 'redline', 767);
line('leo', 'oliveline', 650); line('leo', 'oliveline', 728);
line('leo', 'graydash', 685); line('leo', 'bluedash', 689);
add('leo', 'path', 'redline', { d: d([
  ...a('20,1342 60,1335 126,1308 200,1265 258,1220 324,1160 390,1107 440,1078 478,1062 530,1053 589,1055 640,1067 699,1086 750,1097 801,1105 860,1130 920,1170 975,1218 1030,1268 1085,1320 1140,1368 1190,1405 1250,1436 1309,1453 1375,1461 1410,1456 1440,1440 1469,1415'),
  ...b('0,1411 30,1385 70,1343 111,1300 155,1255 200,1218 240,1192 290,1175 340,1176 397,1187 442,1193 510,1199 552,1208 600,1232 662,1262 710,1286 757,1295 809,1286 860,1258 883,1246 930,1210 993,1158 1059,1103 1120,1050 1180,994 1213,963 1260,923 1300,901 1350,891 1390,898 1420,912 1456,940 1500,975 1530,1008 1567,1049'),
  ...w('1025,530 1050,559 1075,588 1100,610 1125,624 1150,629 1165,631 1185,629 1205,622 1225,611 1245,596 1265,584 1283,572 1290,563')]) });
add('leo', 'path', 'yellowline', { d: d([
  ...a('8,1240 50,1273 90,1297 140,1313 200,1318 258,1308 324,1280 368,1254 430,1210 478,1178 530,1145 589,1110 640,1088 699,1073 750,1071 801,1073 870,1086 940,1106 1000,1134 1065,1168 1140,1217 1200,1263 1265,1315 1309,1345 1361,1382 1400,1407 1450,1427 1469,1431'),
  ...b('0,1431 60,1432 111,1418 160,1396 221,1355 270,1320 331,1272 380,1240 442,1208 490,1195 550,1189 610,1192 662,1205 720,1222 780,1240 840,1254 883,1261 950,1261 990,1252 1045,1231 1103,1199 1160,1158 1213,1115 1260,1074 1324,1022 1390,972 1434,951 1475,937 1520,931 1567,937'),
  ...w('1030,492 1050,504 1075,526 1100,548 1125,573 1150,594 1175,611 1200,620 1230,623 1255,618 1280,608 1305,593')]) });
add('leo', 'path', 'cyanline', { d: d([
  ...a('8,1301 22,1301 38,1318 52,1330 59,1263 74,1293 82,1290 96,1264 104,1285 111,1285 119,1302 126,1370 133,1376 137,1310 150,1290 160,1245 170,1204 184,1206 192,1240 200,1237 207,1250 214,1222 221,1200 229,1223 243,1208 250,1170 257,1168 272,1178 288,1177 295,1150 302,1140 318,1146 324,1128 331,1128 339,1087 347,1107 361,1130 375,1122 390,1098 412,1118 420,1102 434,1121 449,1118 464,1131 471,1200 478,1176 486,1180 493,1202 505,1202 515,1225 522,1202 537,1195 552,1182 566,1146 574,1135 581,1105 588,1112 596,1103 603,1075 615,1100 625,1075 655,1084 669,1095 677,1117 684,1120 691,1150 700,1207 713,1180 721,1160 728,1163 736,1147 750,1170 772,1157 787,1102 794,1105 801,1076 809,1086 830,1087 845,1103 855,1093 867,1102 878,1088 889,1107 904,1120 918,1102 948,1101 970,1084 992,1085 1007,1096 1015,1075 1022,1045 1037,1035 1045,1055 1059,1045 1067,1015 1076,1022 1088,1072 1103,1076 1118,1143 1127,1146 1132,1175 1140,1189 1169,1197 1176,1230 1184,1215 1191,1210 1198,1300 1213,1291 1221,1232 1235,1260 1243,1230 1250,1223 1265,1243 1275,1270 1286,1243 1303,1255 1309,1275 1331,1294 1338,1317 1353,1340 1367,1320 1375,1280 1390,1314 1397,1270 1410,1290 1426,1277 1434,1283 1441,1277 1448,1300 1456,1310 1463,1270'),
  ...b('0,1298 8,1288 20,1242 30,1240 44,1200 60,1187 72,1185 88,1192 100,1205 111,1228 118,1232 125,1210 133,1238 155,1235 165,1225 170,1260 180,1280 199,1290 214,1308 222,1280 229,1280 237,1243 255,1225 272,1220 280,1258 287,1230 295,1235 302,1222 309,1180 317,1173 324,1150 331,1177 340,1175 353,1213 361,1210 368,1180 383,1183 390,1130 398,1114 406,1111 412,1190 427,1190 442,1207 450,1222 464,1265 471,1238 480,1267 488,1270 508,1298 515,1296 530,1270 537,1262 544,1225 552,1252 567,1275 574,1340 582,1343 596,1368 611,1347 618,1362 628,1342 648,1344 655,1305 662,1322 669,1290 684,1322 692,1325 700,1255 713,1242 721,1222 735,1220 743,1190 750,1218 765,1233 780,1246 794,1220 816,1229 824,1218 831,1240 846,1265 860,1306 868,1308 876,1333 890,1323 897,1332 907,1310 927,1300 943,1325 956,1323 963,1340 970,1315 985,1330 993,1350 1000,1360 1007,1318 1015,1330 1022,1330 1030,1267 1050,1267 1059,1234 1066,1240 1074,1184 1088,1182 1103,1163 1118,1147 1145,1168 1162,1187 1175,1182 1191,1150 1210,1175 1220,1167 1228,1143 1243,1128 1250,1108 1257,1072 1265,1076 1272,1060 1294,1073 1303,1097 1309,1095 1317,1070 1330,1068 1346,1043 1365,1092 1375,1098 1397,1088 1404,1104 1412,1085 1419,1096 1427,1080 1448,1068 1463,1073 1471,1097 1480,1080 1487,1074 1500,1046 1515,1040 1529,1057 1537,1035 1550,1024 1567,1030'),
  ...w('1015,500 1027,495 1032,503 1037,507 1043,500 1047,509 1052,506 1060,506 1065,512 1070,517 1075,512 1080,514 1084,520 1088,518 1093,524 1100,523 1105,528 1110,527 1115,538 1119,531 1122,529 1126,534 1130,531 1137,532 1143,530 1147,533 1150,550 1155,552 1158,545 1162,548 1166,546 1170,551 1174,544 1178,541 1182,547 1186,546 1190,553 1195,558 1199,550 1203,551 1207,557 1210,563 1215,566 1219,574 1223,566 1226,582 1230,568 1235,563 1240,565 1244,571 1247,578 1252,574 1258,580 1263,567 1267,569 1272,577 1278,571 1283,574 1287,556 1290,545 1294,541 1298,547 1305,537 1310,543 1314,532 1320,530 1325,533 1333,531 1338,527 1345,526 1349,529 1354,522 1360,521 1365,528 1370,525 1374,512 1378,504 1385,501'),
  ...f('1700,618 1704,625 1707,627 1713,622 1716,623 1719,632 1723,613 1728,613 1731,599 1735,598 1737,600 1741,586 1743,583')]) });
s = '';
for (let x = 15; x <= 1815; x += 45) s += `M${x - 3} 767h7v6h-7z`;
add('leo', 'path', 'marks', { d: s });

/* CCI panel */
grid('cci', 792, 987);
const cci = bars([
  ...e('8,423 20,455 45,508 60,537 80,545 97,572 115,592 125,620 140,668 155,695 170,707 178,707 190,690 215,657 230,625 245,610 270,555 295,510 310,460 335,395 347,362 365,335 382,310 390,292 405,270 422,252 460,247 475,255 490,268 505,285 512,300 522,325 545,352 570,378 590,383 610,378 630,362 650,338 680,310 699,294 725,300 750,307 785,326 820,332 850,337 870,330 890,310 912,293 940,273 965,267 1000,275 1015,280 1050,262 1090,244 1115,253 1140,272 1158,293 1180,320 1195,340 1215,395 1250,455 1290,515 1330,555 1370,610 1390,611 1430,628 1460,638 1485,648 1510,630 1530,595 1543,573'),
  ...w('522,752 535,743 550,740 565,746 580,756 590,758 600,754 610,738 620,722 630,713 641,710 650,716 660,733 670,757 680,776 690,792 700,800'),
  ...f('862,981 868,985 884,988 890,985 904,978'),
  ...w('750,775 765,755 775,751 785,754 795,762 805,772 815,788 825,798 834,803 845,792 855,765 865,735 880,705 895,688 910,684 925,683 935,677 945,671 960,670 970,675 980,681 995,687 1010,688 1030,686 1055,685 1070,684 1085,689 1095,693 1110,700 1130,702 1150,707 1165,711 1180,712 1195,720 1210,724 1225,733 1240,754 1255,770 1270,779 1280,778 1290,770 1300,757 1315,715 1325,688 1335,658 1345,648 1360,649 1375,656'),
  ...f('1700,804 1707,807 1722,810 1733,809 1743,808')]);
add('cci', 'path', 'histogram', { d: cci.map(p => `M${p[0] + 0.5} 909V${Math.round(p[1])}`).join('') });
line('cci', 'grayline', 838); line('cci', 'grayline', 980);
const tone = y => y < 838 ? 'redline' : y > 981 ? 'cyanline' : 'whiteline';
const runs = { redline: '', cyanline: '', whiteline: '' };
for (let i = 1; i < cci.length; i++) runs[tone((cci[i - 1][1] + cci[i][1]) / 2)] += d([cci[i - 1], cci[i]]);
for (const k in runs) add('cci', 'path', k, { d: runs[k] });
add('cci', 'path', 'stoc', { d: d([
  ...e('8,517 55,620 80,680 100,720 115,745 165,745 175,730 210,705 250,685 300,625 330,600 350,570 395,500 430,430 460,340 475,295 505,255 525,215 540,180 555,160 710,160 736,183 760,208 790,220 830,208 860,236 880,242 910,242 960,260 990,257 1015,252 1035,230 1050,190 1065,160 1135,160 1147,180 1170,205 1180,260 1200,330 1215,420 1240,560 1260,650 1270,715 1285,745 1515,745 1530,735'),
  ...f('629,981 643,978 670,976 683,979 700,979 710,970 719,962'),
  ...w('600,775 612,765 620,755 630,730 645,703 660,685 670,679 680,685 690,705 700,740 708,775'),
  ...f('872,968 880,983 886,988 896,988 903,985 921,962'),
  ...w('758,772 765,765 775,762 785,770'),
  ...f('970,962 982,985 988,988 1019,988 1026,983 1033,973 1041,962'),
  ...w('860,755 872,710 885,675 895,655 902,648 1003,648 1015,648 1030,655 1045,662 1060,680 1070,684 1085,688 1095,705 1110,720 1130,745 1145,765'),
  ...f('1413,962 1421,977 1429,988 1566,988 1580,986 1588,982 1600,970 1613,962'),
  ...w('1335,765 1350,745 1365,715 1375,685 1385,658 1392,648 1423,648')]) });
for (const [x, y] of [[75, 983], [630, 983], [906, 981], [1026, 983], [1587, 983]]) add('cci', 'circle', 'dot reddot', { cx: x, cy: y, r: 4 });
for (const [x, y] of [[300, 801], [468, 800], [1284, 799]]) add('cci', 'circle', 'dot cyandot', { cx: x, cy: y, r: 4 });

/* Date axis */
add('dates', 'path', 'ticks', { d: 'M2 990.5H1840' });
s = 'M69.5 990V995M75.5 990V1001';
for (let x = 138; x <= 1794; x += 69) s += `M${x + 0.5} 990V995`;
add('dates', 'path', 'ticks', { d: s });
add('dates', 'text', '', { x: 101, y: 1014 }, '6/05');
'6/14 6/23 7/05 7/17 7/26 8/07 8/18 8/29 9/08 9/20 9/29 10/11 10/23 11/01 11/13 11/23 12/04 12/14 12/28 1/09 1/19 1/31 2/09 2/21'.split(' ')
  .forEach((t, i) => add('dates', 'text', '', { x: 165 + 69 * i, y: 1014 }, t));

/* Slanted tab edges */
document.querySelectorAll('#tabs a').forEach((tab, i) => {
  const edge = (path, side) => {
    const svg = document.createElementNS(NS, 'svg'), p = document.createElementNS(NS, 'path');
    svg.setAttribute('viewBox', '0 0 8 17');
    p.setAttribute('d', path);
    svg.appendChild(p);
    tab[side](svg);
  };
  edge(i ? 'M1 0L7 17M4 9L1 17' : 'M1 0L7 17', 'prepend');
  if (tab.classList.contains('last')) edge('M7 0L1 17', 'append');
});
```
